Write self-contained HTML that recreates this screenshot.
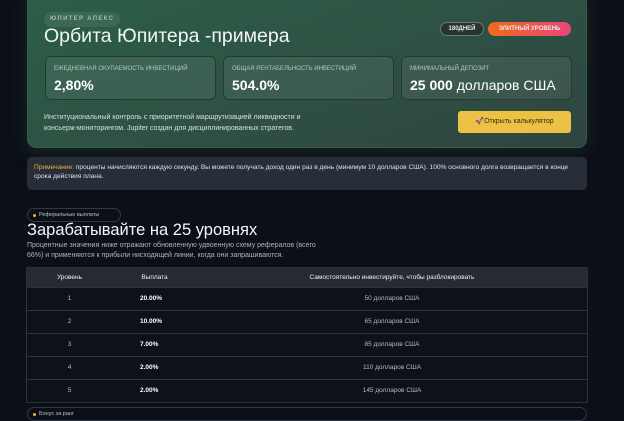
<!DOCTYPE html>
<html><head><meta charset="utf-8"><style>
*{box-sizing:border-box;margin:0;padding:0}
body{width:624px;height:420px;overflow:hidden;background:#0c0f17;font-family:"Liberation Sans","DejaVu Sans",sans-serif;color:#e8ece9;position:relative}
.card{position:absolute;left:27px;top:-10px;width:560px;height:158px;border-radius:9px;background:linear-gradient(160deg,#2b5f49 0%,#2e5244 50%,#2f4540 100%);box-shadow:0 4px 18px rgba(40,90,60,.35);border:1px solid #3b5a4c}
.tag{position:absolute;left:16px;top:21px;height:15px;padding:0 6px;border-radius:8px;background:rgba(255,255,255,.08);font-size:6px;letter-spacing:1.3px;color:#a8bdb2;line-height:15px;font-weight:bold}
h1{position:absolute;left:16px;top:34px;font-size:19.5px;font-weight:normal;color:#f2f5f3}
.b1{position:absolute;left:412px;top:31px;height:14px;width:44px;border-radius:7px;border:1px solid #6a7a72;background:#26352f;font-size:6px;font-weight:bold;text-align:center;line-height:12px}
.b2{position:absolute;left:460px;top:31px;height:14px;width:83px;border-radius:7px;background:linear-gradient(90deg,#f06a1c,#e8457a);font-size:6px;font-weight:bold;text-align:center;line-height:14px}
.stat{position:absolute;top:65px;width:171px;height:44px;border-radius:6px;border:1px solid #243a31;background:rgba(255,255,255,.07)}
.stat .l{position:absolute;left:8px;top:9px;font-size:6px;color:#b6c6bd}
.stat .v{position:absolute;left:8px;top:20px;font-size:14px;font-weight:bold;color:#fff}
.desc{position:absolute;left:16px;top:121px;font-size:7px;line-height:11px;color:#d8e0dc}
.btn{position:absolute;left:430px;top:120px;width:113px;height:22px;border-radius:3px;background:#ecc244;color:#2e2a1a;font-size:7px;text-align:center;line-height:22px}
.note{position:absolute;left:27px;top:157px;width:560px;height:33px;border-radius:5px;background:#282e38;font-size:6.6px;line-height:9px;padding:6px 7px;color:#dfe3e8}
.note b{color:#e4b53a;font-weight:normal}
.pill{position:absolute;height:14px;border:1px solid #323844;border-radius:7px;font-size:5.5px;color:#b9c0ca;line-height:12px;padding-left:11px}
.pill:before{content:"";position:absolute;left:5px;top:5px;width:3px;height:3px;border-radius:50%;background:#e6b43a}
h2{position:absolute;left:27px;top:221px;font-size:16.5px;font-weight:normal;color:#f4f6f8}
.p{position:absolute;left:27px;top:241px;font-size:7px;line-height:10px;color:#aeb4bd;width:335px}
table{position:absolute;left:27px;top:268px;width:560px;border-collapse:collapse;font-size:6.5px;outline:1px solid #2c323c}
th{background:#252a33;height:19px;font-weight:normal;color:#eef0f3}
td{height:23px;border-top:1px solid #2c323c;text-align:center;color:#b4bac3;background:#0e1119}
td.pay{text-align:left;padding-left:28px;color:#fff;font-weight:bold}
</style></head><body>
<div class="card">
<div class="tag">ЮПИТЕР АПЕКС</div>
<h1>Орбита Юпитера -примера</h1>
<div class="b1">180ДНЕЙ</div>
<div class="b2">ЭЛИТНЫЙ УРОВЕНЬ</div>
<div class="stat" style="left:17px"><div class="l">ЕЖЕДНЕВНАЯ ОКУПАЕМОСТЬ ИНВЕСТИЦИЙ</div><div class="v">2,80%</div></div>
<div class="stat" style="left:195px"><div class="l">ОБЩАЯ РЕНТАБЕЛЬНОСТЬ ИНВЕСТИЦИЙ</div><div class="v">504.0%</div></div>
<div class="stat" style="left:373px"><div class="l">МИНИМАЛЬНЫЙ ДЕПОЗИТ</div><div class="v" style="font-weight:normal"><b>25 000</b> долларов США</div></div>
<div class="desc">Институциональный контроль с приоритетной маршрутизацией ликвидности и<br>консьерж-мониторингом. Jupiter создан для дисциплинированных стратегов.</div>
<div class="btn">🚀Открыть калькулятор</div>
</div>
<div class="note"><b>Примечание:</b> проценты начисляются каждую секунду. Вы можете получать доход один раз в день (минимум 10 долларов США). 100% основного долга возвращается в конце<br>срока действия плана.</div>
<div class="pill" style="left:27px;top:208px;width:94px">Реферальные выплаты</div>
<h2>Зарабатывайте на 25 уровнях</h2>
<div class="p">Процентные значения ниже отражают обновленную удвоенную схему рефералов (всего<br>66%) и применяются к прибыли нисходящей линии, когда они запрашиваются.</div>
<table>
<tr><th style="width:85px">Уровень</th><th style="width:85px">Выплата</th><th>Самостоятельно инвестируйте, чтобы разблокировать</th></tr>
<tr><td>1</td><td class="pay">20.00%</td><td>50 долларов США</td></tr>
<tr><td>2</td><td class="pay">10.00%</td><td>65 долларов США</td></tr>
<tr><td>3</td><td class="pay">7.00%</td><td>85 долларов США</td></tr>
<tr><td>4</td><td class="pay">2.00%</td><td>110 долларов США</td></tr>
<tr><td>5</td><td class="pay">2.00%</td><td>145 долларов США</td></tr>
</table>
<div class="pill" style="left:27px;top:407px;width:560px">Бонус за ранг</div>
</body></html>
